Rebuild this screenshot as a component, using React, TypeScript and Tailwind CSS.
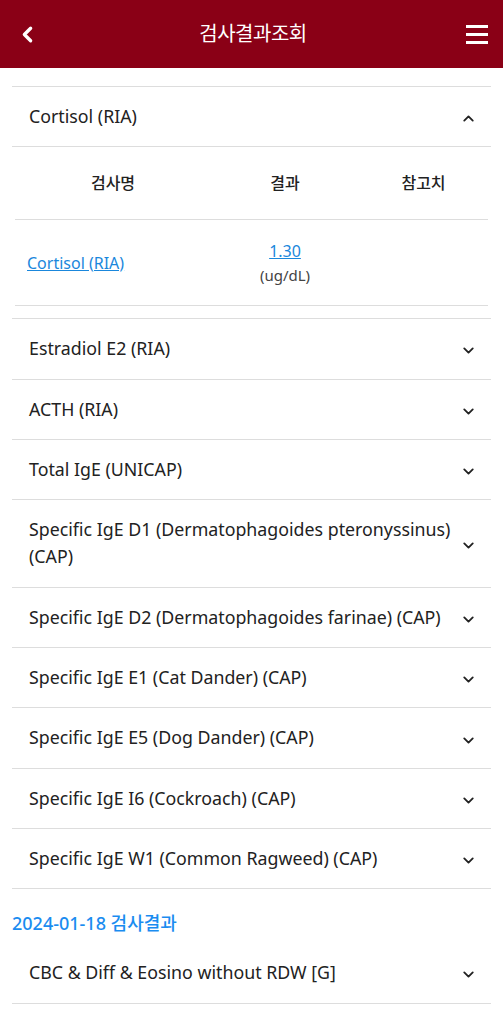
import { ChevronDown, ChevronUp, ChevronLeft } from 'lucide-react';

const font = { fontFamily: '"Noto Sans", "Noto Sans CJK KR", sans-serif' };

const tests = [
  'Estradiol E2 (RIA)',
  'ACTH (RIA)',
  'Total IgE (UNICAP)',
  'Specific IgE D1 (Dermatophagoides pteronyssinus) (CAP)',
  'Specific IgE D2 (Dermatophagoides farinae) (CAP)',
  'Specific IgE E1 (Cat Dander) (CAP)',
  'Specific IgE E5 (Dog Dander) (CAP)',
  'Specific IgE I6 (Cockroach) (CAP)',
  'Specific IgE W1 (Common Ragweed) (CAP)',
];

function Row({ title, open }: { title: string; open?: boolean }) {
  return (
    <div className="flex items-center justify-between border-b border-[#dddddd] pl-[17px] pr-[14px] py-[16px]">
      <span className="text-[17.8px] leading-[27.3px] text-[#222222]">{title}</span>
      {open ? (
        <ChevronUp size={17} strokeWidth={2.6} className="text-[#222] shrink-0 mt-1" />
      ) : (
        <ChevronDown size={17} strokeWidth={2.6} className="text-[#222] shrink-0 mt-1" />
      )}
    </div>
  );
}

export default function App() {
  return (
    <div className="w-[503px] h-[1024px] overflow-hidden bg-white" style={font}>
      <header className="h-[68px] bg-[#8a0016] flex items-center justify-between pl-[15px] pr-[15px]">
        <ChevronLeft size={25} strokeWidth={3.2} className="text-white" />
        <h1 className="text-white text-[20px] tracking-tight">검사결과조회</h1>
        <div className="flex flex-col gap-[5px] w-[22px]">
          <span className="h-[3px] bg-white" />
          <span className="h-[3px] bg-white" />
          <span className="h-[3px] bg-white" />
        </div>
      </header>

      <div className="px-[12px] pt-[18px]">
        <div className="border-t border-[#dddddd]">
          <Row title="Cortisol (RIA)" open />
          <div className="border-b border-[#dddddd] pb-[12px]">
            <div className="mx-[3px]">
              <div className="flex h-[73px] items-center border-b border-[#dddddd] text-[16px] font-medium text-[#222]">
                <div className="w-[196px] text-center">검사명</div>
                <div className="w-[148px] text-center">결과</div>
                <div className="flex-1 text-center">참고치</div>
              </div>
              <div className="flex h-[86px] items-center border-b border-[#dddddd]">
                <div className="w-[196px] pl-[12px] text-[16px] text-[#1a87dc] underline">Cortisol (RIA)</div>
                <div className="w-[148px] text-center leading-[24px]">
                  <div className="text-[16px] text-[#1a87dc] underline">1.30</div>
                  <div className="text-[15px] text-[#444]">(ug/dL)</div>
                </div>
                <div className="flex-1" />
              </div>
            </div>
          </div>
          {tests.map((t) => (
            <Row key={t} title={t} />
          ))}
        </div>

        <div className="pt-[21px] pb-[6px] text-[18px] font-medium text-[#1a8cf0]">2024-01-18 검사결과</div>
        <Row title="CBC & Diff & Eosino without RDW [G]" />
        <Row title="ESR" />
      </div>
    </div>
  );
}
